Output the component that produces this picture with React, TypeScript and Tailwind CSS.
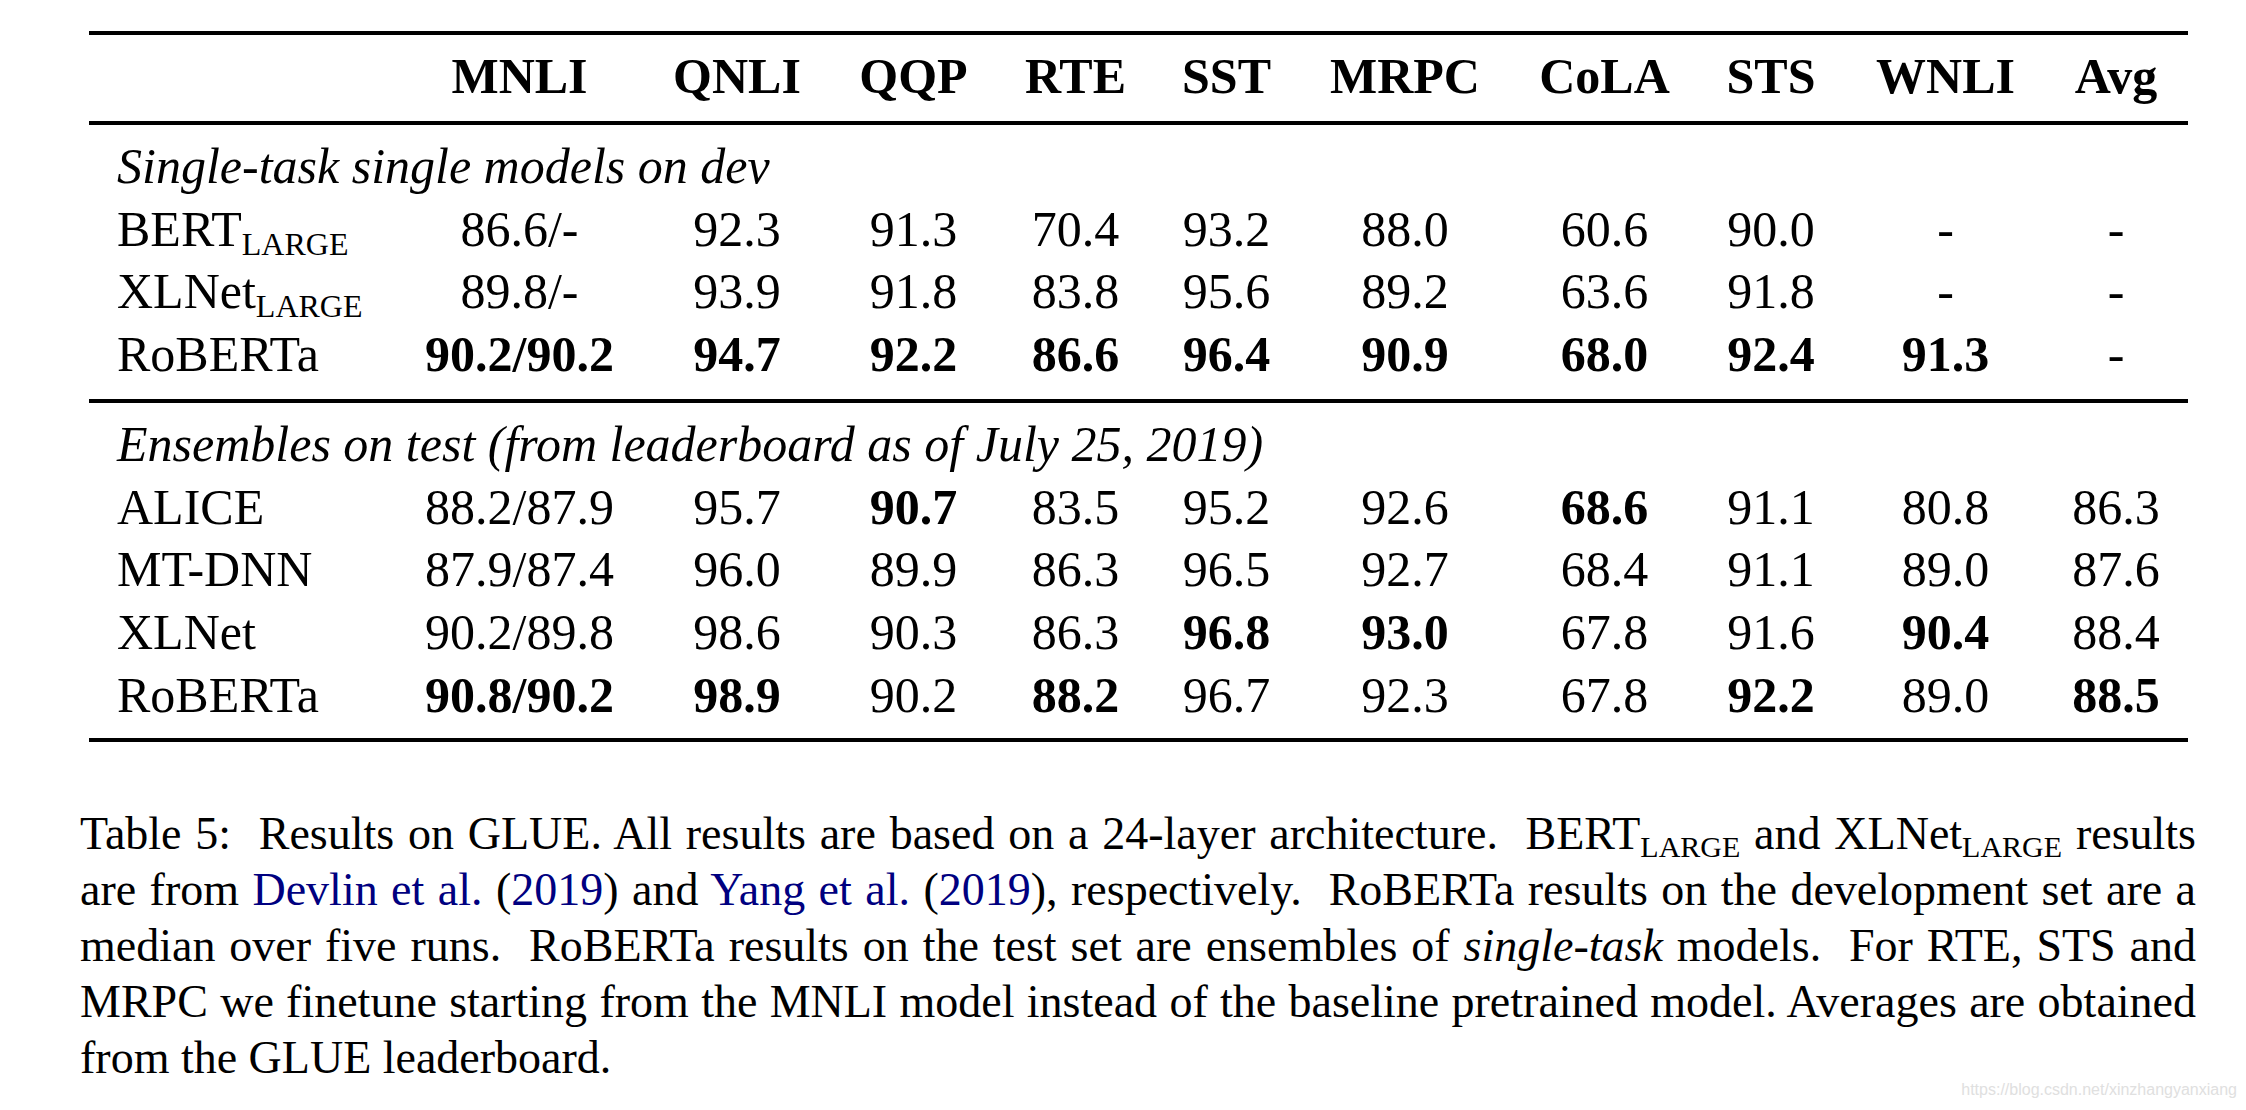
import React from 'react';

interface Cell {
    v: string;
    b?: boolean;
}

interface Row {
    name: string;
    sub?: string;
    cells: Cell[];
}

const COLUMNS = ['MNLI', 'QNLI', 'QQP', 'RTE', 'SST', 'MRPC', 'CoLA', 'STS', 'WNLI', 'Avg'];

const c = (v: string, b = false): Cell => ({ v, b });

const devRows: Row[] = [
    { name: 'BERT', sub: 'LARGE', cells: [c('86.6/-'), c('92.3'), c('91.3'), c('70.4'), c('93.2'), c('88.0'), c('60.6'), c('90.0'), c('-'), c('-')] },
    { name: 'XLNet', sub: 'LARGE', cells: [c('89.8/-'), c('93.9'), c('91.8'), c('83.8'), c('95.6'), c('89.2'), c('63.6'), c('91.8'), c('-'), c('-')] },
    { name: 'RoBERTa', cells: [c('90.2/90.2', true), c('94.7', true), c('92.2', true), c('86.6', true), c('96.4', true), c('90.9', true), c('68.0', true), c('92.4', true), c('91.3', true), c('-')] },
];

const testRows: Row[] = [
    { name: 'ALICE', cells: [c('88.2/87.9'), c('95.7'), c('90.7', true), c('83.5'), c('95.2'), c('92.6'), c('68.6', true), c('91.1'), c('80.8'), c('86.3')] },
    { name: 'MT-DNN', cells: [c('87.9/87.4'), c('96.0'), c('89.9'), c('86.3'), c('96.5'), c('92.7'), c('68.4'), c('91.1'), c('89.0'), c('87.6')] },
    { name: 'XLNet', cells: [c('90.2/89.8'), c('98.6'), c('90.3'), c('86.3'), c('96.8', true), c('93.0', true), c('67.8'), c('91.6'), c('90.4', true), c('88.4')] },
    { name: 'RoBERTa', cells: [c('90.8/90.2', true), c('98.9', true), c('90.2'), c('88.2', true), c('96.7'), c('92.3'), c('67.8'), c('92.2', true), c('89.0'), c('88.5', true)] },
];

const GRID = 'grid grid-cols-[308px_245px_190px_163px_161px_141px_216px_183px_150px_199px_142px]';

const Rule: React.FC = () => <div className="h-[4px] bg-black" />;

const DataRow: React.FC<{ row: Row }> = ({ row }) => (
    <div className={`${GRID} leading-[62.7px]`}>
        <div className="pl-[28px] text-left whitespace-nowrap">
            {row.name}
            {row.sub && <span className="text-[32px] leading-none align-[-9px]">{row.sub}</span>}
        </div>
        {row.cells.map((cell, i) => (
            <div key={i} className={`text-center ${cell.b ? 'font-bold' : ''}`}>{cell.v}</div>
        ))}
    </div>
);

const Section: React.FC<{ title: string; rows: Row[]; bottom: string }> = ({ title, rows, bottom }) => (
    <div className={`pt-[10px] ${bottom}`}>
        <div className="pl-[28px] italic leading-[62.7px] whitespace-nowrap">{title}</div>
        {rows.map((row) => (
            <DataRow key={row.name + row.cells[0].v} row={row} />
        ))}
    </div>
);

const Link: React.FC<{ children: React.ReactNode }> = ({ children }) => (
    <span className="text-[#000080]">{children}</span>
);

const Sub: React.FC = () => <span className="text-[30px] leading-none align-[-8px]">LARGE</span>;

const JLine: React.FC<{ children: React.ReactNode }> = ({ children }) => (
    <div className="text-justify [text-align-last:justify]">{children}</div>
);

const App: React.FC = () => {
    return (
        <div className="relative w-[2246px] h-[1110px] overflow-hidden bg-white text-black font-['Liberation_Serif','Times_New_Roman',serif]">
            <div className="pt-[31px] pl-[89px] w-[2188px]">
                <div className="w-[2099px] text-[50px]">
                    <Rule />
                    <div className={`${GRID} leading-[82px] pb-[4px] font-bold`}>
                        <div />
                        {COLUMNS.map((col) => (
                            <div key={col} className="text-center">{col}</div>
                        ))}
                    </div>
                    <Rule />
                    <Section title="Single-task single models on dev" rows={devRows} bottom="pb-[13px]" />
                    <Rule />
                    <Section title="Ensembles on test (from leaderboard as of July 25, 2019)" rows={testRows} bottom="pb-[12px]" />
                    <Rule />
                </div>
            </div>

            <div className="mt-[64px] ml-[80px] w-[2116px] text-[46px] leading-[56px]">
                <JLine>
                    Table 5:&nbsp; Results on GLUE. All results are based on a 24-layer architecture.&nbsp; BERT<Sub /> and XLNet<Sub /> results
                </JLine>
                <JLine>
                    are from <Link>Devlin et al.</Link> (<Link>2019</Link>) and <Link>Yang et al.</Link> (<Link>2019</Link>), respectively.&nbsp; RoBERTa results on the development set are a
                </JLine>
                <JLine>
                    median over five runs.&nbsp; RoBERTa results on the test set are ensembles of <span className="italic">single-task</span> models.&nbsp; For RTE, STS and
                </JLine>
                <JLine>
                    MRPC we finetune starting from the MNLI model instead of the baseline pretrained model. Averages are obtained
                </JLine>
                <div>from the GLUE leaderboard.</div>
            </div>

            <div className="absolute right-[9px] bottom-[12px] text-[16px] leading-none text-[#e0e0e0] font-['Liberation_Sans',Arial,sans-serif]">
                https://blog.csdn.net/xinzhangyanxiang
            </div>
        </div>
    );
};

export default App;
